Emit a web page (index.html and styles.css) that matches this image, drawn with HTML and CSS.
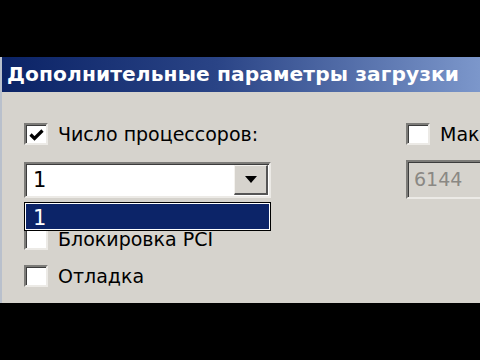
FILE: index.html
```html
<!DOCTYPE html>
<html lang="ru">
<head>
  <meta charset="UTF-8">
  <meta name="viewport" content="width=device-width, initial-scale=1.0">
  <title>Дополнительные параметры загрузки</title>
  <link rel="stylesheet" href="styles.css">
</head>
<body>
<div class="screen">
  <div class="dialog">
    <div class="titlebar">Дополнительные параметры загрузки</div>

    <div class="content">
      <div class="col-left">
        <div class="check-row">
          <span class="box">
            <svg width="15" height="13" viewBox="0 0 15 13"><polyline points="1.5,5.5 5.5,9.5 13.5,1.5" fill="none" stroke="#000" stroke-width="3.2"/></svg>
          </span>
          <span>Число процессоров:</span>
        </div>

        <div class="combo">
          <span class="combo-value">1</span>
          <span class="combo-btn">
            <svg width="12" height="7" viewBox="0 0 12 7"><polygon points="0,0 12,0 6,7" fill="#000"/></svg>
          </span>
          <div class="combo-list">
            <div class="combo-item">1</div>
          </div>
        </div>

        <div class="check-row row-pci">
          <span class="box"></span>
          <span>Блокировка PCI</span>
        </div>

        <div class="check-row row-debug">
          <span class="box"></span>
          <span>Отладка</span>
        </div>
      </div>

      <div class="col-right">
        <div class="check-row">
          <span class="box"></span>
          <span>Максимум памяти:</span>
        </div>
        <div class="field">6144</div>
      </div>
    </div>
  </div>
</div>
</body>
</html>
```

FILE: styles.css
```css
body {
  margin: 0;
  background: #000;
  font-family: "DejaVu Sans", sans-serif;
  overflow: hidden;
}

.screen {
  width: 480px;
  height: 360px;
  padding-top: 57px;
  box-sizing: border-box;
  overflow: hidden;
}

.dialog {
  height: 246px;
  background: #d6d3cd;
  border-left: 2px solid #b9c0cc;
  overflow: hidden;
}

.titlebar {
  height: 35px;
  line-height: 35px;
  padding-left: 5px;
  color: #fff;
  font-weight: bold;
  font-size: 20.2px;
  letter-spacing: 0.1px;
  white-space: nowrap;
  background: linear-gradient(to right, #0b2366, #2a4486 45%, #7c97cb);
}

.content {
  display: grid;
  grid-template-columns: 247px 1fr;
  column-gap: 135px;
  padding: 31px 0 0 22px;
}

.check-row {
  display: flex;
  align-items: center;
  gap: 10px;
  height: 22px;
  font-size: 19px;
  color: #000;
  white-space: nowrap;
}

.box {
  width: 20px;
  height: 18px;
  flex: none;
  display: flex;
  align-items: center;
  justify-content: center;
  background: #fff;
  border-top: 2px solid #7c7b78;
  border-left: 2px solid #7c7b78;
  border-right: 2px solid #eceae6;
  border-bottom: 2px solid #eceae6;
  box-shadow: inset 1px 1px 0 #3c3c3c;
}

.box svg {
  margin-top: 3px;
}

.combo {
  position: relative;
  margin-top: 17px;
  height: 36px;
  display: flex;
  background: #fff;
  border-top: 2px solid #7c7b78;
  border-left: 2px solid #7c7b78;
  border-right: 2px solid #eceae6;
  border-bottom: 2px solid #eceae6;
  box-shadow: inset 1px 1px 0 #3c3c3c;
  box-sizing: border-box;
}

.combo-value {
  flex: 1;
  padding-left: 7px;
  line-height: 32px;
  font-size: 21px;
}

.combo-btn {
  width: 31px;
  margin: 1px 1px 1px 0;
  display: flex;
  align-items: center;
  justify-content: center;
  background: #d6d3cd;
  border-top: 1px solid #f4f2ee;
  border-left: 1px solid #f4f2ee;
  border-right: 2px solid #555;
  border-bottom: 2px solid #555;
}

.combo-list {
  position: absolute;
  top: 38px;
  left: -2px;
  width: 247px;
  height: 29px;
  box-sizing: border-box;
  border: 1px solid #000;
  background: #fff;
  padding: 1px;
  overflow: hidden;
}

.combo-item {
  height: 100%;
  background: #0c2468;
  color: #fff;
  font-size: 21px;
  line-height: 29px;
  padding-left: 7px;
}

.row-pci {
  margin-top: 30px;
}

.row-debug {
  margin-top: 14px;
  height: 23px;
}

.field {
  margin-top: 15px;
  width: 120px;
  height: 39px;
  box-sizing: border-box;
  padding-left: 6px;
  line-height: 35px;
  font-size: 19px;
  color: #8a8884;
  background: #d6d3cd;
  border-top: 2px solid #7c7b78;
  border-left: 2px solid #7c7b78;
  border-right: 2px solid #eceae6;
  border-bottom: 2px solid #eceae6;
  box-shadow: inset 1px 1px 0 #3c3c3c;
}
```
